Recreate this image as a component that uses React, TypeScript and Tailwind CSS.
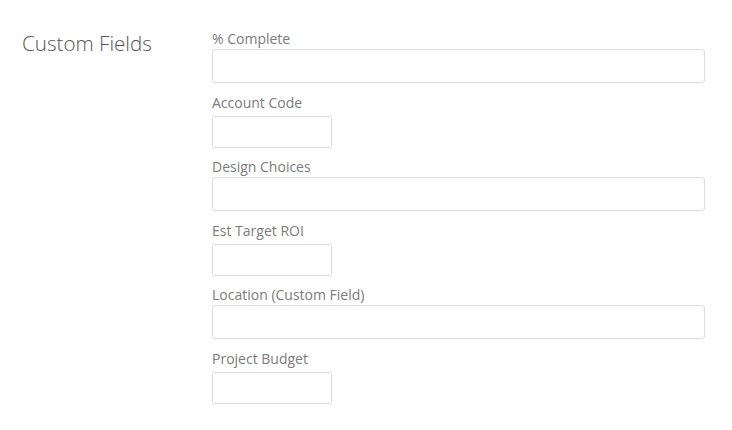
const fields: { label: string; wide: boolean }[] = [
  { label: "% Complete", wide: true },
  { label: "Account Code", wide: false },
  { label: "Design Choices", wide: true },
  { label: "Est Target ROI", wide: false },
  { label: "Location (Custom Field)", wide: true },
  { label: "Project Budget", wide: false },
];

const App = () => {
  return (
    <div
      className="min-h-screen bg-white flex items-start pt-[29px] pl-[22px]"
      style={{ fontFamily: '"Open Sans", "Liberation Sans", sans-serif' }}
    >
      <h2 className="w-[190px] shrink-0 text-[20.6px] leading-7 font-light text-[#555]">
        Custom Fields
      </h2>
      <div className="w-[493px] flex flex-col">
        {fields.map((f) =>
          f.wide ? (
            <div key={f.label} className="flex flex-col mb-[10px]">
              <label className="text-[14px] leading-5 text-[#7b7b7b]">
                {f.label}
              </label>
              <input
                type="text"
                className="h-[34px] w-full rounded-[3px] border border-[#ddd] px-2 text-[14px] outline-none"
              />
            </div>
          ) : (
            <div key={f.label} className="flex flex-col mb-[9px]">
              <label className="text-[14px] leading-5 text-[#7b7b7b]">
                {f.label}
              </label>
              <input
                type="text"
                className="mt-[3px] h-[32px] w-[120px] rounded-[3px] border border-[#ddd] px-2 text-[14px] outline-none"
              />
            </div>
          )
        )}
      </div>
    </div>
  );
};

export default App;
